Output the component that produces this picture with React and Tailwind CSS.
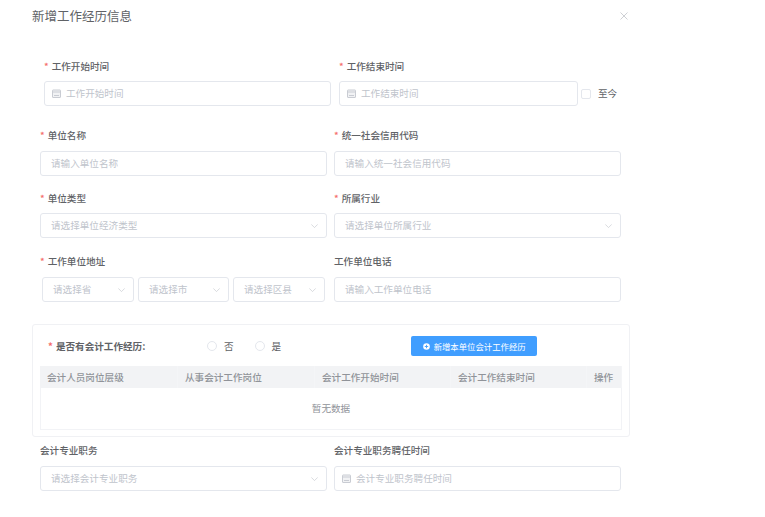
import React from "react";

const font = { fontFamily: '"Noto Sans CJK SC", "Noto Sans", sans-serif' };

function Cal() {
  return (
    <svg width="9" height="9" viewBox="0 0 9 9" fill="none" stroke="#c9ccd3" strokeWidth="1" className="shrink-0">
      <rect x="0.5" y="1" width="8" height="7.5" rx="0.5" fill="#f1f2f4" />
      <path d="M0.5 3h8M2 6.5h5" />
    </svg>
  );
}

function Chev() {
  return (
    <svg width="7" height="4" viewBox="0 0 7 4" fill="none" stroke="#c8cbd1" strokeWidth="0.7" className="shrink-0">
      <path d="M0.3 0.4L3.5 3.6L6.7 0.4" />
    </svg>
  );
}

function Label({ text, req, className = "" }) {
  return (
    <div className={"flex items-center h-[14px] text-[9.6px] font-medium text-[#606266] " + className}>
      {req && <span className="text-[#f56c6c] mr-[3px] text-[9.6px]">*</span>}
      <span>{text}</span>
    </div>
  );
}

function Input({ text, icon, chevron, className = "" }) {
  return (
    <div className={"flex items-center h-[25px] border border-[#e4e7ed] rounded-[3px] bg-white text-[9.6px] text-[#c0c4cc] " + className}>
      {icon && <span className="ml-[7px] mr-[5px] flex"><Cal /></span>}
      <span className={"flex-1 whitespace-nowrap " + (icon ? "" : "pl-[10px]")}>{text}</span>
      {chevron && <span className="mr-[8px] flex"><Chev /></span>}
    </div>
  );
}

function Field({ label, req, text, icon, chevron, gap = "mt-[9px]" }) {
  return (
    <div className="w-[287px]">
      <Label text={label} req={req} />
      <Input className={gap} text={text} icon={icon} chevron={chevron} />
    </div>
  );
}

function Row({ children, className = "" }) {
  return <div className={"flex gap-[7px] pl-[40px] " + className}>{children}</div>;
}

function Radio({ text }) {
  return (
    <div className="flex items-center text-[9.6px] text-[#606266]">
      <span className="w-[10px] h-[10px] rounded-full border border-[#e4e7ed] bg-white mr-[7px]" />
      {text}
    </div>
  );
}

const cols = [
  ["会计人员岗位层级", "w-[138px] pl-[7px]"],
  ["从事会计工作岗位", "w-[137px] pl-[7px]"],
  ["会计工作开始时间", "w-[136px] pl-[7px]"],
  ["会计工作结束时间", "w-[136px] pl-[7px]"],
  ["操作", "flex-1 pl-[7px]"],
];

export default function App() {
  return (
    <div style={font} className="w-[765px] h-[517px] bg-white overflow-hidden">
      <div className="flex items-center justify-between h-[32px] pl-[32px] w-[628px]">
        <span className="text-[12.5px] text-[#606266]">新增工作经历信息</span>
        <svg width="8" height="8" viewBox="0 0 8 8" stroke="#b9bcc2" strokeWidth="0.7" fill="none" className="-mt-[1px]">
          <path d="M0.5 0.5l7 7M7.5 0.5l-7 7" />
        </svg>
      </div>

      <div className="flex pl-[44px] pt-[27px]">
        <div className="w-[287px]">
          <Label text="工作开始时间" req />
          <Input className="mt-[8px]" text="工作开始时间" icon />
        </div>
        <div className="ml-[8px] w-[239px]">
          <Label text="工作结束时间" req />
          <Input className="mt-[8px]" text="工作结束时间" icon />
        </div>
        <div className="flex items-center h-[25px] mt-[22px] ml-[3px] text-[9.6px] text-[#606266]">
          <span className="w-[10px] h-[10px] border border-[#e4e7ed] rounded-[2px] mr-[7px]" />
          至今
        </div>
      </div>

      <Row className="mt-[22px]">
        <Field label="单位名称" req text="请输入单位名称" />
        <Field label="统一社会信用代码" req text="请输入统一社会信用代码" />
      </Row>

      <Row className="mt-[15px]">
        <Field label="单位类型" req text="请选择单位经济类型" chevron gap="mt-[8px]" />
        <Field label="所属行业" req text="请选择单位所属行业" chevron gap="mt-[8px]" />
      </Row>

      <Row className="mt-[16px]">
        <div className="w-[287px]">
          <Label text="工作单位地址" req />
          <div className="flex gap-[4px] mt-[9px] pl-[2px]">
            <Input className="w-[92px]" text="请选择省" chevron />
            <Input className="w-[91px]" text="请选择市" chevron />
            <Input className="w-[92px]" text="请选择区县" chevron />
          </div>
        </div>
        <Field label="工作单位电话" text="请输入工作单位电话" />
      </Row>

      <div className="ml-[32px] w-[598px] h-[113px] mt-[22px] border border-[#f0f1f4] rounded-[3px] px-[7px] pt-[11px]">
        <div className="flex items-center h-[20px]">
          <Label className="ml-[8px] w-[159px] font-semibold" text="是否有会计工作经历:" req />
          <Radio text="否" />
          <span className="w-[21px]" />
          <Radio text="是" />
          <button className="ml-[130px] w-[126px] h-[20px] bg-[#409eff] rounded-[2px] flex items-center justify-center text-[8.4px] text-white">
            <svg width="7" height="7" viewBox="0 0 7 7" className="mr-[4px]">
              <circle cx="3.5" cy="3.5" r="3.3" fill="#fff" />
              <path d="M1.8 3.5h3.4M3.5 1.8v3.4" stroke="#409eff" strokeWidth="0.9" />
            </svg>
            新增本单位会计工作经历
          </button>
        </div>
        <div className="mt-[10px] w-[582px] border border-t-0 border-[#f2f3f6]">
          <div className="flex h-[22px] bg-[#f2f3f5] -mx-px">
            {cols.map(([t, w]) => (
              <div key={t} className={"flex items-center text-[9.6px] font-medium text-[#909399] border-r border-[#f4f5f7] " + w}>{t}</div>
            ))}
          </div>
          <div className="h-[41px] flex items-center justify-center text-[9.6px] text-[#909399]">暂无数据</div>
        </div>
      </div>

      <Row className="mt-[6px]">
        <Field label="会计专业职务" text="请选择会计专业职务" chevron />
        <Field label="会计专业职务聘任时间" text="会计专业职务聘任时间" icon />
      </Row>
    </div>
  );
}
